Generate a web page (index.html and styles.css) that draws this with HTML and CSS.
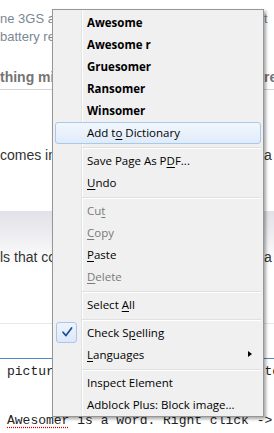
FILE: index.html
```html
<!DOCTYPE html>
<html lang="en">

<head>
    <meta charset="UTF-8">
    <meta name="viewport" content="width=device-width, initial-scale=1.0">
    <title>Spell check menu</title>
    <link rel="stylesheet" href="styles.css">
</head>

<body>
    <div class="page">
        <div class="intro">
            <div class="row"><span class="lt">ne 3GS and the iPhone 4 both get a</span><span class="rt">t</span></div>
            <div class="row"><span class="lt">battery replacement program this year</span><span class="rt"></span></div>
        </div>
        <div class="tease">
            <div class="row"><span class="lt">thing missing from the new features</span><span class="rt">res</span></div>
        </div>
        <div class="story">
            <div class="row"><span class="lt">comes in white and black and costs</span><span class="rt">a</span></div>
        </div>
        <div class="band">
            <div class="row"><span class="lt">ls that come with the phone include</span><span class="rt">a</span></div>
        </div>
        <div class="rule"></div>
        <div class="rule blue"></div>
        <div class="code">picture of the spell-check menu, to show it</div>
        <div class="code last"><span class="misspelt">Awesomer</span> is a word. Right click -&gt; Add to Dictionary</div>
    </div>

    <div class="menu">
        <div class="item bold">Awesome</div>
        <div class="item bold">Awesome r</div>
        <div class="item bold">Gruesomer</div>
        <div class="item bold">Ransomer</div>
        <div class="item bold">Winsomer</div>
        <div class="item hover">Add t<u>o</u> Dictionary</div>
        <div class="sep"></div>
        <div class="item">Save Page As P<u>D</u>F...</div>
        <div class="item"><u>U</u>ndo</div>
        <div class="sep"></div>
        <div class="item off">Cu<u>t</u></div>
        <div class="item off"><u>C</u>opy</div>
        <div class="item"><u>P</u>aste</div>
        <div class="item off"><u>D</u>elete</div>
        <div class="sep"></div>
        <div class="item">Select <u>A</u>ll</div>
        <div class="sep"></div>
        <div class="item">
            <span class="check">
                <svg width="21" height="20" viewBox="0 0 21 20">
                    <path d="M7 10.2 L10 13.6 L15.6 6" fill="none" stroke="#1c4c9c" stroke-width="1.7" stroke-linecap="round" stroke-linejoin="round"/>
                </svg>
            </span>
            Check S<u>p</u>elling
        </div>
        <div class="item"><u>L</u>anguages<span class="arrow"></span></div>
        <div class="sep"></div>
        <div class="item">Inspect Element</div>
        <div class="item">Adblock Plus: Block image...</div>
    </div>
</body>

</html>
```

FILE: styles.css
```css
* {
    margin: 0;
    padding: 0;
    box-sizing: border-box;
}

body {
    font-family: "Liberation Sans", Arial, sans-serif;
    background-color: #fff;
    overflow: hidden;
}

.page {
    width: 274px;
    height: 433px;
    overflow: hidden;
}

.row {
    display: grid;
    grid-template-columns: 264px auto;
    white-space: nowrap;
}

.row .lt {
    overflow: hidden;
}

.intro {
    padding-top: 10px;
    font-size: 13px;
    line-height: 18px;
    color: #7b8794;
}

.tease {
    margin-top: 22px;
    padding-bottom: 3px;
    font-size: 14px;
    font-weight: bold;
    line-height: 18px;
    color: #747474;
    border-bottom: 1px solid #d4d4d4;
}

.story {
    margin-top: 56px;
    font-size: 14px;
    line-height: 18px;
    color: #333;
}

.band {
    margin-top: 47px;
    height: 69px;
    padding-top: 37px;
    font-size: 14px;
    line-height: 18px;
    color: #333;
    background: linear-gradient(#e1e1e7, #fff 56px);
}

.rule {
    margin-top: 43px;
    border-top: 1px solid #e8e8e8;
}

.rule.blue {
    margin-top: 34px;
    border-top-color: #4f88c2;
}

.code {
    margin-top: 5px;
    padding-left: 7px;
    font-family: "Liberation Mono", "Courier New", monospace;
    font-size: 13px;
    line-height: 16px;
    color: #222;
    white-space: nowrap;
}

.code.last {
    margin-top: 33px;
}

.misspelt {
    text-decoration: underline dotted #d00;
    text-underline-offset: 3px;
}

/* context menu, sits over the page */
.menu {
    position: absolute;
    left: 52px;
    top: 9px;
    width: 212px;
    padding: 2px 2px 0 2px;
    font-family: "Open Sans", "Noto Sans", sans-serif;
    font-size: 11.5px;
    color: #000;
    border: 1px solid #979797;
    background:
        linear-gradient(to right, transparent 28px, #e2e3e3 28px, #e2e3e3 29px, #fff 29px, #fff 30px, transparent 30px),
        #f0f0f0;
    box-shadow: 2px 2px 3px rgba(0, 0, 0, 0.35);
    z-index: 2;
}

.item {
    position: relative;
    height: 22px;
    line-height: 20px;
    padding-left: 31px;
    border: 1px solid transparent;
    border-radius: 3px;
    white-space: nowrap;
}

.item u {
    text-underline-offset: 2px;
}

.item.bold {
    font-weight: bold;
}

.item.off {
    color: #7a7a7a;
}

.item.hover {
    border-color: #a9c8ee;
    background: linear-gradient(#f2f7fd, #e0ebf9);
}

.check {
    position: absolute;
    left: 0;
    top: -1px;
    width: 21px;
    height: 21px;
    border: 1px solid #a9c6ee;
    border-radius: 3px;
    background: linear-gradient(#eef4fc, #dce8f8);
}

.check svg {
    display: block;
    margin: -1px 0 0 -1px;
}

.arrow {
    position: absolute;
    right: 8px;
    top: 6px;
    border-left: 4px solid #000;
    border-top: 3.5px solid transparent;
    border-bottom: 3.5px solid transparent;
}

.sep {
    height: 6px;
    margin-left: 27px;
    background: linear-gradient(transparent 3px, #e0e0e0 3px, #e0e0e0 4px, #fff 4px, #fff 5px, transparent 5px);
}
```
